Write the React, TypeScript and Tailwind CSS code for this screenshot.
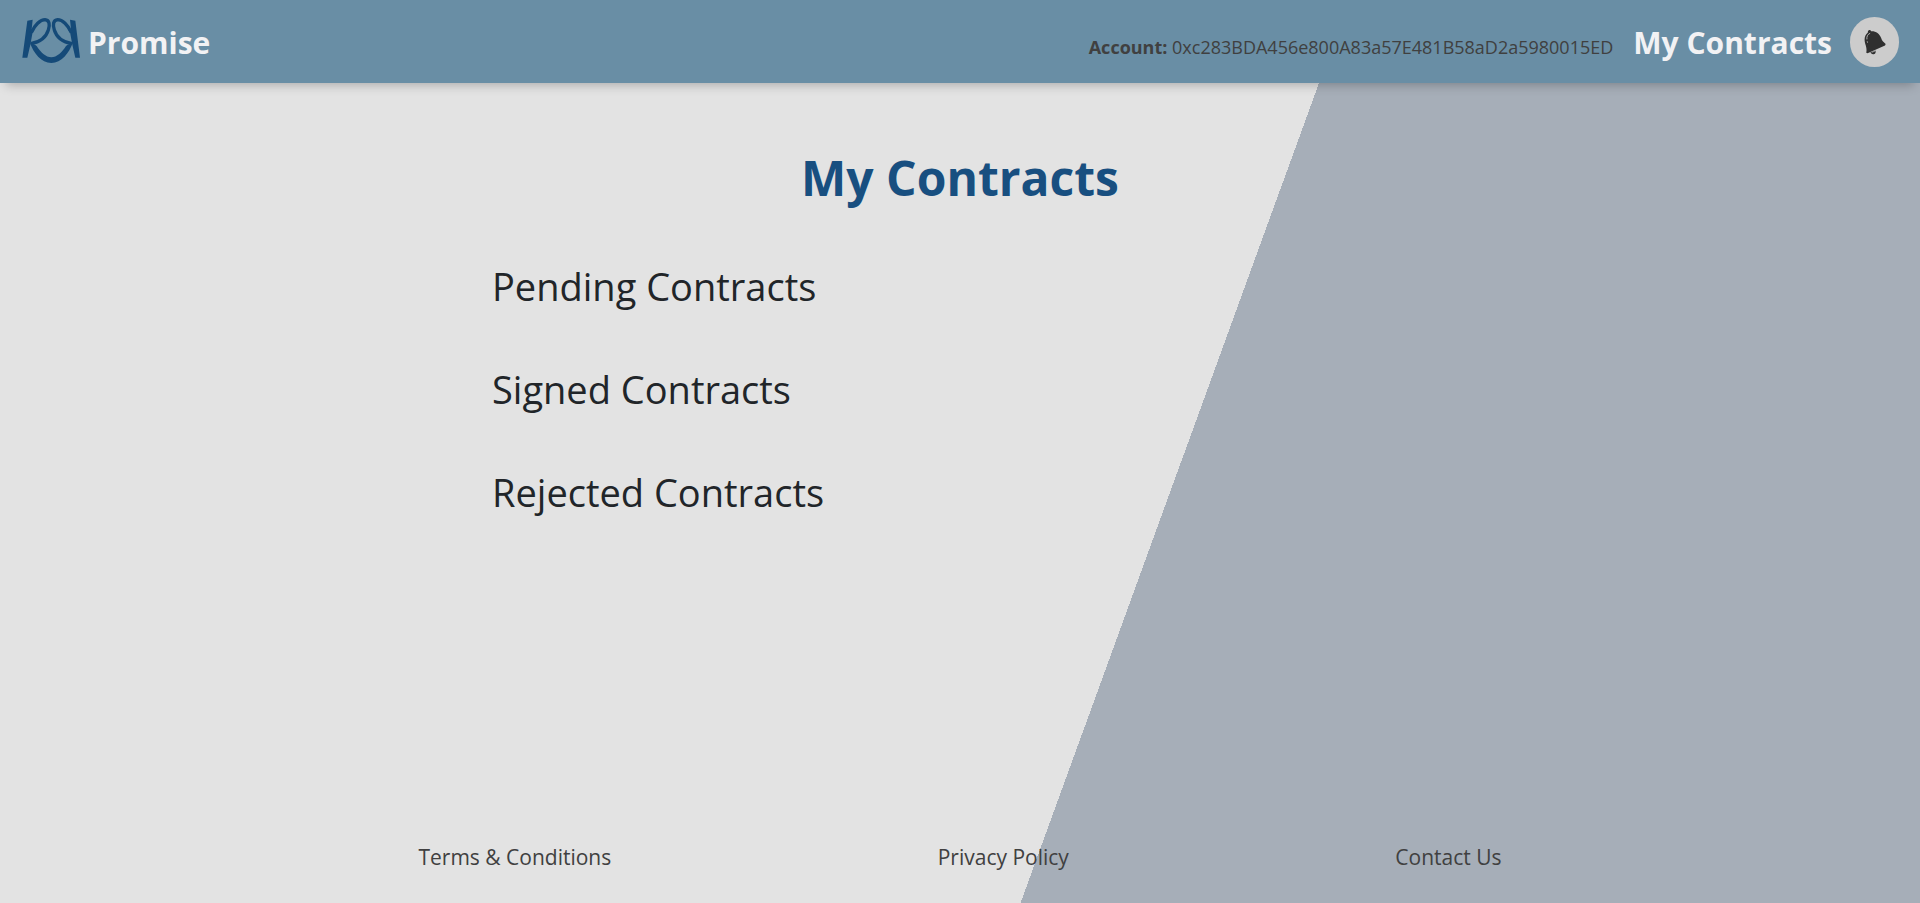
import React from 'react';

const sections: string[] = ['Pending Contracts', 'Signed Contracts', 'Rejected Contracts'];
const footerLinks: string[] = ['Terms & Conditions', 'Privacy Policy', 'Contact Us'];

function Logo() {
  return (
    <svg viewBox="22 24 174 141" className="h-[47px] w-[58px]" fill="none" stroke="#154a78" aria-hidden="true">
      <path d="M38 32 54 29 51 58 59 60 54 66 47 104 38 143H23Z" fill="#154a78" stroke="none" />
      <path d="M182 32 166 29 169 58 161 60 166 66 173 104 182 143H196Z" fill="#154a78" stroke="none" />
      <path d="M50 68C60 45 77 29 91 29C105 30 106 46 101 60C94 83 73 97 48 101" strokeWidth="10" />
      <path d="M170 68C160 45 143 29 129 29C115 30 114 46 119 60C126 83 147 97 172 101" strokeWidth="10" />
      <path d="M46 98C54 101 61 103 66 108C77 126 94 142 110 142C126 142 143 126 154 108C159 103 166 101 174 98C164 128 140 159 110 159C80 159 56 128 46 98Z" fill="#154a78" stroke="none" />
    </svg>
  );
}

function BellIcon() {
  return (
    <svg viewBox="58 52 68 80" className="h-[26px] w-[22px]" fill="none" aria-hidden="true">
      <path d="M70 63C69 54 78 53 80 59C94 58 106 66 111 80C113 87 118 93 125 98L123 103L69 127L65 125C67 115 65 107 62 98C57 82 61 71 70 63Z" fill="#2f2f2f" />
      <path d="M78 124 93 118C96 124 92 130 86 130C82 130 79 127 78 124Z" fill="#2f2f2f" />
      <path d="M82 124 92 120" stroke="#cccccc" strokeWidth="2" />
      <path d="M77 65C69 68 66 75 67 84M68 90 69 94" stroke="#cccccc" strokeWidth="2.5" />
    </svg>
  );
}

export default function App() {
  return (
    <div className="flex min-h-screen flex-col bg-[linear-gradient(110deg,#e3e3e3_60%,#a6aeb8_60%)] font-['Open_Sans','Noto_Sans',sans-serif] text-[#212529]">
      <header className="flex h-[83px] items-center justify-between bg-[#698ea5] pr-[21px] pl-[22px] shadow-[0_8px_10px_-6px_rgba(0,0,0,0.25)]">
        <a href="#home" className="flex items-center gap-2 text-[30px] leading-10 font-bold text-[#f2f2f4]">
          <Logo />
          <span className="pt-0.5">Promise</span>
        </a>
        <div className="flex items-center">
          <nav className="flex items-baseline gap-5 pt-0.5">
            <p className="text-[18px] text-[#404040]">
              <strong className="font-bold">Account:</strong> 0xc283BDA456e800A83a57E481B58aD2a5980015ED
            </p>
            <a href="#contracts" className="text-[30px] leading-10 font-bold text-[#f2f2f4]">
              My Contracts
            </a>
          </nav>
          <button type="button" aria-label="Notifications" className="ml-[18px] flex h-[50px] w-[49px] items-center justify-center rounded-full bg-[#cccccc]">
            <BellIcon />
          </button>
        </div>
      </header>

      <main className="mx-auto flex w-full max-w-[936px] grow flex-col">
        <h1 className="mt-[63px] text-center text-[48px] leading-[64px] font-bold text-[#184f80]">My Contracts</h1>
        <div className="mt-[52px] flex flex-col gap-[55px]">
          {sections.map((title) => (
            <h2 key={title} className="text-[38px] leading-[48px]">
              {title}
            </h2>
          ))}
        </div>
      </main>

      <footer className="flex justify-evenly px-[92px] pb-[30px] text-[21px] leading-8 text-[#404040]">
        {footerLinks.map((label) => (
          <a key={label} href="#footer">
            {label}
          </a>
        ))}
      </footer>
    </div>
  );
}
